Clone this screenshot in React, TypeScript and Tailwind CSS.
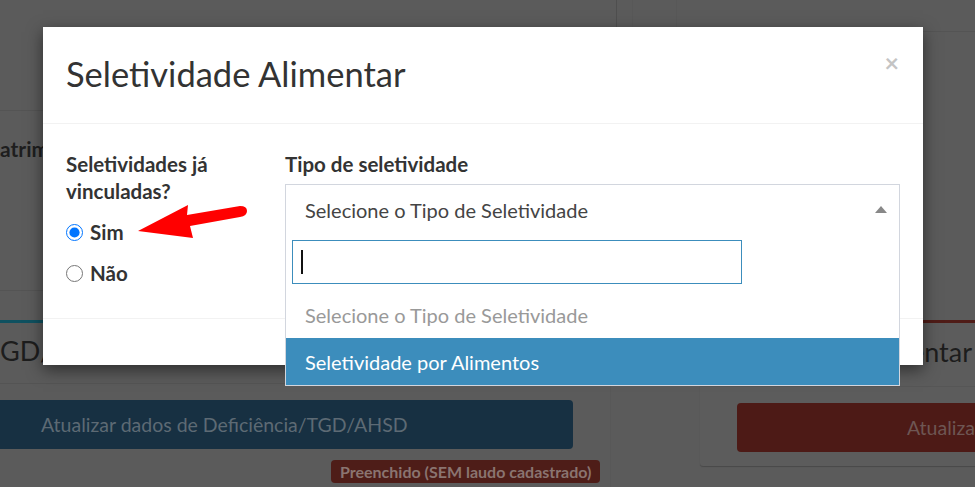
import React from "react";

const font = { fontFamily: "Lato, 'Open Sans', sans-serif" };

function Background() {
  return (
    <div className="absolute inset-0 flex flex-col bg-[#5b5b5b]">
      <div className="flex h-[32px]">
        <div className="w-[617px] shrink-0 border-r border-[#4f4f4f]" />
        <div className="w-[16px] shrink-0 border-r border-[#585858]" />
        <div className="w-[44px] shrink-0 border-r border-[#585858]" />
        <div className="flex-1 border-b border-[#545454]" />
      </div>
      <div className="h-[79px] border-b border-[#545454] w-[617px]" />
      <div className="h-[180px] w-[617px] border-b border-[#545454] pt-[27px]">
        <div className="text-[21px] font-bold text-[#1e1e1e] leading-[22px]">atrimônio</div>
      </div>
      <div className="flex flex-1">
        <div className="w-[611px] shrink-0 flex flex-col border-r border-[#585858]">
          <div className="mt-[29px] border-t-[3px] border-[#0f5160] h-[64px] border-b border-b-[#545454] flex items-center">
            <span className="text-[27px] text-[#1d1d1d] -mt-[4px]">GD/AHSD</span>
          </div>
          <div className="mt-[16px] h-[49px] w-[573px] rounded-r-[4px] bg-[#173042] flex items-center pl-[41px]">
            <span className="text-[19.5px] text-[#5d6a74] whitespace-nowrap">Atualizar dados de Deficiência/TGD/AHSD</span>
          </div>
          <div className="mt-[11px] flex pl-[331px]">
            <span className="h-[23px] px-[9px] rounded-[4px] bg-[#4e1d18] text-[#8a7470] text-[16px] font-bold leading-[23px] whitespace-nowrap">
              Preenchido (SEM laudo cadastrado)
            </span>
          </div>
        </div>
        <div className="flex-1 min-w-0 pl-[89px] pt-[29px]">
          <div className="h-[146px] rounded-l-[3px] border-t-[3px] border-[#4f1c17] bg-[#5c5c5c] shadow-[0_1px_1px_rgba(0,0,0,0.2)] flex flex-col overflow-hidden">
            <div className="h-[64px] border-b border-[#565656] flex items-center justify-end pr-[3px]">
              <span className="text-[27px] text-[#1d1d1d] whitespace-nowrap -mt-[4px]">Alimentar</span>
            </div>
            <div className="mt-[16px] ml-[37px] h-[49px] rounded-l-[4px] bg-[#4d1a16] flex items-center pl-[170px] overflow-hidden">
              <span className="text-[19.5px] text-[#6e5653] whitespace-nowrap">Atualizar</span>
            </div>
          </div>
        </div>
      </div>
    </div>
  );
}

function Arrow() {
  return (
    <svg className="absolute left-0 top-0 pointer-events-none" width="975" height="487">
      <path
        d="M138 231 L188 205 L187 215 L240 206 Q247 206 247 211 Q247 216 240 217 L190 226 L193 238 Z"
        fill="#ff0000"
      />
    </svg>
  );
}

export default function App() {
  return (
    <div className="relative w-[975px] h-[487px] overflow-hidden" style={font}>
      <Background />
      <div className="absolute left-[43px] top-[27px] w-[880px] h-[338px] bg-white shadow-[0_5px_15px_rgba(0,0,0,0.5)] flex flex-col">
        <div className="h-[97px] border-b border-[#f2f2f2] flex items-center justify-between pl-[23px] pr-[24px]">
          <h4 className="text-[34.5px] text-[#333] leading-none -mt-[2px]">Seletividade Alimentar</h4>
          <span className="text-[#c4c4c4] text-[25px] font-bold leading-none -mt-[26px]">×</span>
        </div>
        <div className="h-[195px] flex pl-[23px] pr-[23px] pt-[27px] border-b border-[#f2f2f2]">
          <div className="w-[219px] shrink-0">
            <div className="text-[20.5px] font-bold text-[#333] leading-[27px] w-[180px]">Seletividades já vinculadas?</div>
            <label className="mt-[17px] flex items-center gap-[7px] h-[20px]">
              <input type="radio" name="sel" defaultChecked className="w-[17px] h-[17px] m-0 accent-[#0075ff]" />
              <span className="text-[20.5px] font-bold text-[#333]">Sim</span>
            </label>
            <label className="mt-[21px] flex items-center gap-[7px] h-[20px]">
              <input type="radio" name="sel" className="w-[17px] h-[17px] m-0" />
              <span className="text-[20.5px] font-bold text-[#333]">Não</span>
            </label>
          </div>
          <div className="flex-1">
            <div className="text-[20.5px] font-bold text-[#333] leading-[27px]">Tipo de seletividade</div>
            <div className="relative mt-[6px]">
              <div className="h-[51px] border border-[#d2d6de] flex items-center justify-between pl-[19px] pr-[12px]">
                <span className="text-[20px] text-[#444]">Selecione o Tipo de Seletividade</span>
                <span className="w-0 h-0 border-l-[6px] border-r-[6px] border-b-[7px] border-l-transparent border-r-transparent border-b-[#888]" />
              </div>
              <div className="absolute left-0 right-0 top-[50px] bg-white border border-[#d2d6de] border-t-0 z-10">
                <div className="pt-[6px] pl-[6px] pb-[7px]">
                  <div className="w-[450px] h-[44px] border border-[#3c8dbc] flex items-center pl-[8px]">
                    <span className="w-[2px] h-[24px] bg-[#111]" />
                  </div>
                </div>
                <div className="h-[47px] flex items-center pl-[19px] text-[20px] text-[#999]">Selecione o Tipo de Seletividade</div>
                <div className="h-[47px] flex items-center pl-[19px] text-[20px] text-white bg-[#3c8dbc]">Seletividade por Alimentos</div>
              </div>
            </div>
          </div>
        </div>
      </div>
      <Arrow />
    </div>
  );
}
